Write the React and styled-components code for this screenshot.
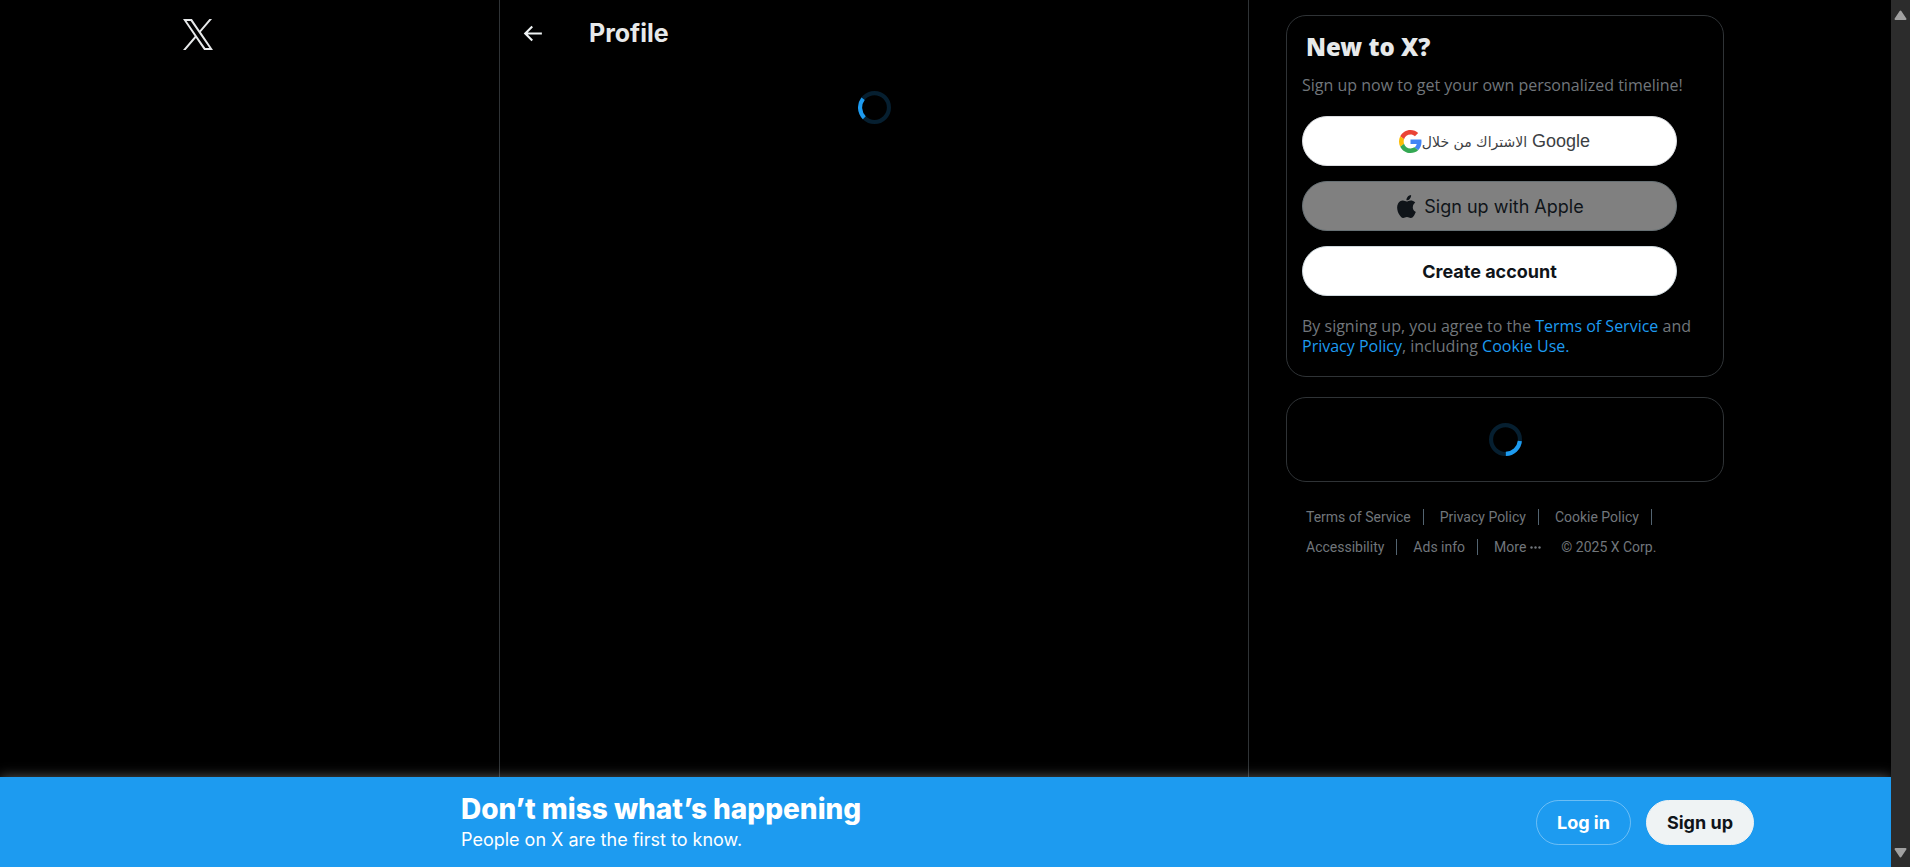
import React from 'react';
import styled, { createGlobalStyle } from 'styled-components';
import { SiApple } from 'react-icons/si';

const GlobalStyle = createGlobalStyle`
  * { box-sizing: border-box; }
  body {
    margin: 0;
    background: #000;
    color: #e7e9ea;
    font-family: Inter, "Liberation Sans", sans-serif;
  }
  h1, h2, p, ul { margin: 0; padding: 0; }
  a { text-decoration: none; }
  button { font-family: inherit; cursor: pointer; }
`;

const Window = styled.div`
  display: flex;
  min-height: 100vh;
`;

const Page = styled.div`
  display: flex;
  flex-direction: column;
  flex: 1;
  min-width: 0;
`;

const Columns = styled.div`
  display: grid;
  grid-template-columns: 499fr minmax(0, 750px) 642fr;
  flex: 1;
`;

const LeftColumn = styled.header`
  display: flex;
  justify-content: flex-end;
`;

const LogoNav = styled.nav`
  width: 316px;
  padding-top: 19px;
`;

const LogoLink = styled.a`
  display: inline-block;
  color: #e7e9ea;
`;

const Timeline = styled.main`
  border: solid #2f3336;
  border-width: 0 1px;
`;

const TitleBar = styled.div`
  display: flex;
  align-items: center;
  gap: 44px;
  height: 66px;
  padding-left: 20px;
`;

const IconButton = styled.button`
  display: flex;
  padding: 0;
  border: 0;
  background: none;
  color: #eff3f4;
`;

const Title = styled.h1`
  font-size: 25px;
  font-weight: 700;
  line-height: 32px;
`;

const SpinnerBox = styled.div`
  display: flex;
  align-items: center;
  justify-content: center;
  height: 83px;
`;

const RightColumn = styled.div`
  padding: 15px 24px 0 37px;
`;

const Aside = styled.aside`
  display: flex;
  flex-direction: column;
  gap: 20px;
  max-width: 438px;
`;

const Card = styled.section`
  border: 1px solid #2f3336;
  border-radius: 20px;
`;

const SignupCard = styled(Card)`
  padding: 15px 15px 20px;
`;

const CardTitle = styled.h2`
  padding-left: 4px;
  font-family: "Noto Sans", sans-serif;
  font-size: 24px;
  font-weight: 900;
  line-height: 32px;
`;

const CardText = styled.p`
  color: #71767b;
  font-family: "Open Sans", sans-serif;
  font-size: 16px;
  line-height: 20px;
`;

const Lead = styled(CardText)`
  margin-top: 12px;
`;

const TextLink = styled.a`
  color: #1d9bf0;
`;

const Options = styled.div`
  display: flex;
  flex-direction: column;
  gap: 15px;
  max-width: 375px;
  margin: 21px 0 20px;
`;

const Option = styled.button`
  display: flex;
  align-items: center;
  justify-content: center;
  gap: 6px;
  height: 50px;
  border: 1px solid #cfd9de;
  border-radius: 25px;
  background: #fff;
  color: #0f1419;
  font-size: 18px;
  font-weight: ${(p) => (p.$strong ? 700 : 400)};
`;

const GoogleOption = styled(Option)`
  gap: 0;
  padding-left: 16px;
  border-color: #dadce0;
  color: #3c4043;
  font-family: "Liberation Sans", sans-serif;
`;

const AppleOption = styled(Option)`
  border-color: #677074;
  background: #808080;
`;

const Arabic = styled.span`
  font-family: "DejaVu Sans", sans-serif;
  font-size: 14px;
`;

const FooterLinks = styled.ul`
  display: flex;
  flex-wrap: wrap;
  padding: 0 20px;
  list-style: none;
  color: #71767b;
  font-family: Roboto, sans-serif;
  font-size: 14px;
`;

const FooterItem = styled.li`
  display: flex;
  align-items: center;
  gap: 12px;
  height: 30px;
  margin-right: 16px;

  &::after {
    content: ${(p) => (p.$divided ? '""' : 'none')};
    width: 1px;
    height: 16px;
    background: #536471;
  }
`;

const FooterLink = styled.a`
  color: inherit;
`;

const MoreButton = styled.button`
  display: flex;
  align-items: center;
  gap: 4px;
  padding: 0 4px 0 0;
  border: 0;
  background: none;
  color: inherit;
  font-size: 14px;
`;

const BottomBar = styled.section`
  position: sticky;
  bottom: 0;
  display: flex;
  align-items: center;
  height: 90px;
  background: #1d9bf0;
  box-shadow: 0 0 12px rgba(255, 255, 255, 0.35);
  color: #fff;
  clip-path: inset(-20px 0 0 0);
`;

const Gutter = styled.div`
  flex: ${(p) => p.$share} 1 0;
`;

const BarContent = styled.div`
  display: flex;
  align-items: center;
  justify-content: space-between;
  flex: 0 1 1293px;
`;

const Headline = styled.h2`
  font-size: 28px;
  font-weight: 800;
  line-height: 36px;
`;

const Subline = styled.p`
  font-size: 18px;
  line-height: 26px;
`;

const Actions = styled.div`
  display: flex;
  gap: 15px;
`;

const PillLink = styled.a`
  display: flex;
  align-items: center;
  height: 45px;
  padding: 0 20px;
  border: 1px solid ${(p) => (p.$filled ? '#eff3f4' : 'rgba(255, 255, 255, 0.35)')};
  border-radius: 23px;
  background: ${(p) => (p.$filled ? '#eff3f4' : 'transparent')};
  color: ${(p) => (p.$filled ? '#0f1419' : '#fff')};
  font-size: 18px;
  font-weight: 700;
`;

const ScrollTrack = styled.div`
  position: sticky;
  top: 0;
  display: flex;
  flex-direction: column;
  align-items: center;
  justify-content: space-between;
  width: 19px;
  height: 100vh;
  padding: 10px 0 9px;
  background: #2c2c2c;
`;

function XLogo() {
  return (
    <svg width="30" height="31" viewBox="0 0 1200 1227" preserveAspectRatio="none" fill="currentColor" aria-hidden="true">
      <path d="M714.163 519.284L1160.89 0H1055.03L667.137 450.887L357.328 0H0L468.492 681.821L0 1226.37H105.866L515.491 750.218L842.672 1226.37H1200L714.137 519.284H714.163ZM569.165 687.828L521.697 619.934L144.011 79.6944H306.615L611.412 515.685L658.88 583.579L1055.08 1150.3H892.476L569.165 687.854V687.828Z" />
    </svg>
  );
}

function BackArrow() {
  return (
    <svg width="25" height="25" viewBox="0 0 24 24" fill="currentColor" aria-hidden="true">
      <path d="M7.414 13l5.043 5.04-1.414 1.42L3.586 12l7.457-7.46 1.414 1.42L7.414 11H21v2H7.414z" />
    </svg>
  );
}

function Spinner({ angle }) {
  return (
    <svg width="33" height="33" viewBox="0 0 32 32" fill="none" stroke="#1d9bf0" strokeWidth="4" role="img" aria-label="Loading">
      <circle cx="16" cy="16" r="14" opacity="0.2" />
      <circle cx="16" cy="16" r="14" strokeDasharray="20 80" transform={`rotate(${angle} 16 16)`} />
    </svg>
  );
}

function GoogleLogo() {
  return (
    <svg width="23" height="23" viewBox="0 0 48 48" aria-hidden="true">
      <path fill="#EA4335" d="M24 9.5c3.54 0 6.71 1.22 9.21 3.6l6.85-6.85C35.9 2.38 30.47 0 24 0 14.62 0 6.51 5.38 2.56 13.22l7.98 6.19C12.43 13.72 17.74 9.5 24 9.5z" />
      <path fill="#4285F4" d="M46.98 24.55c0-1.57-.15-3.09-.38-4.55H24v9.02h12.94c-.58 2.96-2.26 5.48-4.78 7.18l7.73 6c4.51-4.18 7.09-10.36 7.09-17.65z" />
      <path fill="#FBBC05" d="M10.53 28.59c-.48-1.45-.76-2.99-.76-4.59s.27-3.14.76-4.59l-7.98-6.19C.92 16.46 0 20.12 0 24c0 3.88.92 7.54 2.56 10.78l7.97-6.19z" />
      <path fill="#34A853" d="M24 48c6.48 0 11.93-2.13 15.89-5.81l-7.73-6c-2.15 1.45-4.92 2.3-8.16 2.3-6.26 0-11.57-4.22-13.47-9.91l-7.98 6.19C6.51 42.62 14.62 48 24 48z" />
    </svg>
  );
}

function Dots() {
  return (
    <svg width="11" height="3" viewBox="0 0 11 3" fill="currentColor" aria-hidden="true">
      <circle cx="1.5" cy="1.5" r="1.2" />
      <circle cx="5.5" cy="1.5" r="1.2" />
      <circle cx="9.5" cy="1.5" r="1.2" />
    </svg>
  );
}

function ScrollArrow({ down }) {
  return (
    <svg width="13" height="10" viewBox="0 0 13 10" fill="#a0a0a0" stroke="#a0a0a0" strokeWidth="2" strokeLinejoin="round" aria-hidden="true">
      <path d={down ? 'M1.5 1h10L6.5 8.5z' : 'M1.5 9h10L6.5 1.5z'} />
    </svg>
  );
}

export default function App() {
  return (
    <Window>
      <GlobalStyle />
      <Page>
        <Columns>
          <LeftColumn>
            <LogoNav>
              <LogoLink href="#home" aria-label="X"><XLogo /></LogoLink>
            </LogoNav>
          </LeftColumn>

          <Timeline>
            <TitleBar>
              <IconButton type="button" aria-label="Back"><BackArrow /></IconButton>
              <Title>Profile</Title>
            </TitleBar>
            <SpinnerBox><Spinner angle={135} /></SpinnerBox>
          </Timeline>

          <RightColumn>
            <Aside>
              <SignupCard>
                <CardTitle>New to X?</CardTitle>
                <Lead>Sign up now to get your own personalized timeline!</Lead>
                <Options>
                  <GoogleOption type="button">
                    <GoogleLogo />
                    <span><Arabic lang="ar">الاشتراك من خلال</Arabic> Google</span>
                  </GoogleOption>
                  <AppleOption type="button">
                    <SiApple size={23} aria-hidden="true" />
                    Sign up with Apple
                  </AppleOption>
                  <Option type="button" $strong>Create account</Option>
                </Options>
                <CardText>
                  By signing up, you agree to the <TextLink href="#tos">Terms of Service</TextLink> and{' '}
                  <TextLink href="#privacy">Privacy Policy</TextLink>, including{' '}
                  <TextLink href="#cookies">Cookie Use.</TextLink>
                </CardText>
              </SignupCard>

              <Card>
                <SpinnerBox><Spinner angle={6} /></SpinnerBox>
              </Card>

              <FooterLinks>
                <FooterItem $divided><FooterLink href="#tos">Terms of Service</FooterLink></FooterItem>
                <FooterItem $divided><FooterLink href="#privacy">Privacy Policy</FooterLink></FooterItem>
                <FooterItem $divided><FooterLink href="#cookies">Cookie Policy</FooterLink></FooterItem>
                <FooterItem $divided><FooterLink href="#accessibility">Accessibility</FooterLink></FooterItem>
                <FooterItem $divided><FooterLink href="#ads">Ads info</FooterLink></FooterItem>
                <FooterItem><MoreButton type="button">More <Dots /></MoreButton></FooterItem>
                <FooterItem>© 2025 X Corp.</FooterItem>
              </FooterLinks>
            </Aside>
          </RightColumn>
        </Columns>

        <BottomBar>
          <Gutter $share={461} />
          <BarContent>
            <div>
              <Headline>Don’t miss what’s happening</Headline>
              <Subline>People on X are the first to know.</Subline>
            </div>
            <Actions>
              <PillLink href="#login">Log in</PillLink>
              <PillLink href="#signup" $filled>Sign up</PillLink>
            </Actions>
          </BarContent>
          <Gutter $share={137} />
        </BottomBar>
      </Page>
      <ScrollTrack aria-hidden="true">
        <ScrollArrow />
        <ScrollArrow down />
      </ScrollTrack>
    </Window>
  );
}
